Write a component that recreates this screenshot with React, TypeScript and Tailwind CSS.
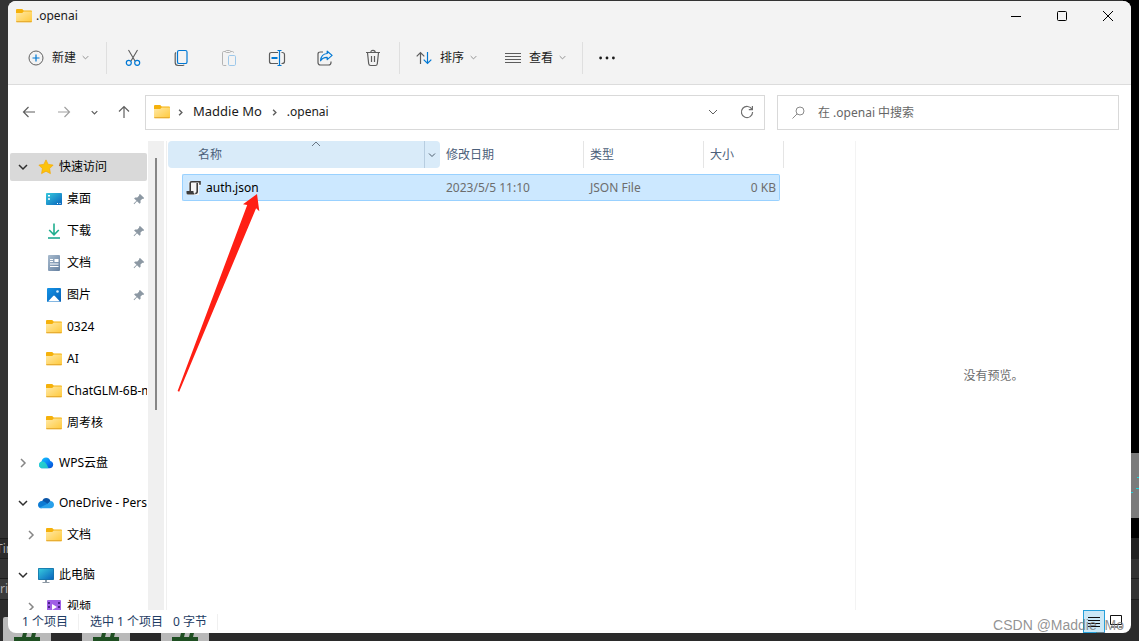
import { useState } from 'react'

type IconProps = { className?: string }

interface NavEntry {
  label: string
  icon: React.FC<IconProps>
  level: 0 | 1
  state?: 'open' | 'closed'
  pinned?: boolean
  active?: boolean
}

const FolderIcon: React.FC<IconProps> = ({ className }) => (
  <svg viewBox="0 0 16 14" className={`h-3.5 w-4 shrink-0 ${className ?? ''}`}>
    <defs>
      <linearGradient id="folder" x1="0" y1="0" x2="1" y2="1">
        <stop offset="0" stopColor="#ffe9a8" />
        <stop offset="1" stopColor="#ffc93a" />
      </linearGradient>
    </defs>
    <path d="M0 1Q0 0 1 0h5.200L7.700 1.500H15q1 0 1 1v4H0z" fill="#f5b10b" />
    <path d="M0 4h6.200L7.700 2.500H16v9.700q0 1-1 1H1q-1 0-1-1z" fill="url(#folder)" />
    <path d="M.3 12.700h15.400" stroke="#e3a62b" strokeWidth="1" />
  </svg>
)

const StarIcon: React.FC<IconProps> = () => (
  <svg viewBox="0 0 16 16" className="size-4 shrink-0">
    <path
      d="M8 .9l2.200 4.500 4.900.7-3.500 3.500.8 5L8 12.200l-4.400 2.400.8-5L.9 6.100l4.900-.7z"
      fill="#fcc30b"
      stroke="#f5a800"
      strokeWidth=".7"
      strokeLinejoin="round"
    />
  </svg>
)

const DesktopIcon: React.FC<IconProps> = () => (
  <svg viewBox="0 0 16 14" className="h-3.5 w-4 shrink-0">
    <defs>
      <linearGradient id="desktop" x1="0" y1="0" x2="1" y2="1">
        <stop offset="0" stopColor="#36c9dd" />
        <stop offset="1" stopColor="#0863bd" />
      </linearGradient>
    </defs>
    <rect y="1" width="16" height="12" rx=".8" fill="url(#desktop)" />
    <path d="M2 3h2v1.500H2zM2 6.200h2v1.500H2zM11 11h1v1h-1zM13.500 11h1v1h-1z" fill="#fff" />
  </svg>
)

const DownloadIcon: React.FC<IconProps> = () => (
  <svg viewBox="0 0 16 16" className="size-4 shrink-0" fill="none">
    <path d="M8 .5v11M3.200 7L8 11.800 12.800 7" stroke="#1fae8e" strokeWidth="1.600" />
    <path d="M2 15h12" stroke="#0fa58a" strokeWidth="1.600" />
  </svg>
)

const DocumentIcon: React.FC<IconProps> = () => (
  <svg viewBox="0 0 16 16" className="size-4 shrink-0">
    <defs>
      <linearGradient id="document" x1="0" y1="0" x2="1" y2="1">
        <stop offset="0" stopColor="#a9bccf" />
        <stop offset="1" stopColor="#6580a0" />
      </linearGradient>
    </defs>
    <rect x="2" width="12" height="16" rx="1" fill="url(#document)" />
    <path d="M4 4h3v1H4zM4 6h3v1H4zM8.500 4h4v3h-4zM4 8.500h8.500v1H4zM4 11h8.500v1H4z" fill="#fff" />
  </svg>
)

const PictureIcon: React.FC<IconProps> = () => (
  <svg viewBox="0 0 16 16" className="size-4 shrink-0">
    <defs>
      <linearGradient id="picture" x1="0" y1="0" x2="1" y2="1">
        <stop offset="0" stopColor="#1493e6" />
        <stop offset="1" stopColor="#0561b8" />
      </linearGradient>
    </defs>
    <rect x="1" y="1" width="14" height="14" rx="1" fill="url(#picture)" />
    <path d="M2 14.500l5.200-5.600q.8-.8 1.600 0l5.200 5.600z" fill="#fff" />
    <circle cx="11.500" cy="4.500" r="1.300" fill="#d4eeff" />
  </svg>
)

const WpsCloudIcon: React.FC<IconProps> = () => (
  <svg viewBox="0 0 16 16" className="size-4 shrink-0">
    <defs>
      <linearGradient id="wps" x1="0" y1="0" x2="1" y2="1">
        <stop offset="0" stopColor="#16d3ff" />
        <stop offset=".6" stopColor="#0a7cf5" />
        <stop offset="1" stopColor="#0548c8" />
      </linearGradient>
    </defs>
    <path
      d="M3.500 6.500C4 3.900 5.800 2.500 8 2.500c2.400 0 3.900 1.500 4.300 3.600 1.800.3 2.900 1.600 2.900 3.400 0 2.200-1.500 3.800-3.700 3.800H5C2.700 13.300 1 12 1 9.900c0-1.700 1-3 2.500-3.400z"
      fill="url(#wps)"
    />
    <path d="M1 9.900C1 8 2.400 6.500 4.500 6.500c2 0 3.500 1.600 4.500 3.500l1.500 3.300H5C2.700 13.300 1 12 1 9.900z" fill="#2fe0c0" opacity=".75" />
  </svg>
)

const OneDriveIcon: React.FC<IconProps> = () => (
  <svg viewBox="0 0 16 12" className="h-3 w-4 shrink-0">
    <path d="M4 4.500C4.800 2 6.300 1 8.200 1c2.100 0 3.700 1.200 4.300 3.200L9 8z" fill="#0a55a8" />
    <path d="M0 8c0-2.200 1.700-3.900 4-3.900 1.200 0 2 .4 3 1l3 2-6.500 4.200C1.500 11.300 0 10 0 8z" fill="#0c7bd4" />
    <path d="M12.200 4.100C14.500 4.200 16 5.700 16 7.700c0 2-1.400 3.600-3.500 3.600h-9C2.500 11.300 2 11 1.500 10.700L10 6.500z" fill="#29a0ea" />
  </svg>
)

const ComputerIcon: React.FC<IconProps> = () => (
  <svg viewBox="0 0 16 16" className="size-4 shrink-0">
    <rect y="1" width="16" height="12" rx=".8" fill="#1573a8" />
    <rect x=".8" y="1.800" width="14.400" height="10.400" fill="url(#desktop)" />
    <path d="M7 13h2v2H7zM4.500 15h7v1h-7z" fill="#8e9aa5" />
  </svg>
)

const VideoIcon: React.FC<IconProps> = () => (
  <svg viewBox="0 0 16 16" className="size-4 shrink-0">
    <rect x="1" y="1" width="14" height="14" rx="1" fill="#a05fe6" />
    <path d="M2 3h2v2H2zM2 7h2v2H2zM2 11h2v2H2zM12 3h2v2h-2zM12 7h2v2h-2zM12 11h2v2h-2z" fill="#4a2289" />
    <path d="M6 5l5 3-5 3z" fill="#fff" />
  </svg>
)

const PinIcon: React.FC = () => (
  <svg viewBox="0 0 12 12" className="size-3 shrink-0" fill="#8c98a3">
    <path d="M7 .9L11.200 5l-1 .9-.8-.2-1.900 1.900.1 2.200-1 1L4 8.300 1.200 11.200.6 10.600 3.500 7.800 1.100 5.400l1-1 2.200.1 1.900-1.900L6 1.800z" />
  </svg>
)

interface ChevronProps {
  direction: 'down' | 'right' | 'up'
  className: string
  width?: number
  size?: 'sm' | 'md'
}

const Chevron: React.FC<ChevronProps> = ({
  direction,
  className,
  width = 1,
  size = 'md',
}) => (
  <svg
    viewBox="0 0 10 10"
    className={`shrink-0 ${size === 'sm' ? 'size-[7px]' : 'size-2.5'} ${className}`}
    fill="none"
    stroke="currentColor"
    strokeWidth={width}
  >
    {direction === 'down' && <path d="M1 3l4 4 4-4" />}
    {direction === 'up' && <path d="M1 7l4-4 4 4" />}
    {direction === 'right' && <path d="M3 1l4 4-4 4" />}
  </svg>
)

const NAV: NavEntry[] = [
  { label: '快速访问', icon: StarIcon, level: 0, state: 'open', active: true },
  { label: '桌面', icon: DesktopIcon, level: 1, pinned: true },
  { label: '下载', icon: DownloadIcon, level: 1, pinned: true },
  { label: '文档', icon: DocumentIcon, level: 1, pinned: true },
  { label: '图片', icon: PictureIcon, level: 1, pinned: true },
  { label: '0324', icon: FolderIcon, level: 1 },
  { label: 'AI', icon: FolderIcon, level: 1 },
  { label: 'ChatGLM-6B-main', icon: FolderIcon, level: 1 },
  { label: '周考核', icon: FolderIcon, level: 1 },
  { label: 'WPS云盘', icon: WpsCloudIcon, level: 0, state: 'closed' },
  { label: 'OneDrive - Personal', icon: OneDriveIcon, level: 0, state: 'open' },
  { label: '文档', icon: FolderIcon, level: 1, state: 'closed' },
  { label: '此电脑', icon: ComputerIcon, level: 0, state: 'open' },
  { label: '视频', icon: VideoIcon, level: 1, state: 'closed' },
]

const Backdrop: React.FC = () => (
  <div
    aria-hidden="true"
    className="absolute inset-0 flex flex-col justify-end overflow-hidden bg-[#2b2b2b]"
  >
    <div className="flex flex-1 justify-between">
      <div className="flex flex-1 flex-col overflow-hidden text-xs text-[#b0b0b0]">
        <div className="flex-1 bg-[#333333]" />
        <div className="flex h-[21px] items-center border-y border-[#1c1c1c] bg-[#2b2b2b] -indent-1">
          Tin
        </div>
        <div className="h-5 border-b border-[#1c1c1c] bg-[#333333]" />
        <div className="flex h-[21px] items-center border-b border-[#1c1c1c] bg-[#3a3a3a]">ri</div>
        <div className="h-[17px]" />
      </div>
      <div className="flex w-4 flex-col">
        <div className="flex-1 bg-black" />
        <div className="flex h-[65px] items-center justify-end bg-[#7b7b7b]">
          <svg viewBox="0 0 8 20" className="h-5 w-2" fill="#1fd0d8">
            <path d="M6 1h2v1H6zM5 12h3v1H5zM0 16h2v1H0z" />
          </svg>
        </div>
        <div className="h-5 bg-black" />
        <div className="h-[21px] bg-[#222222]" />
        <div className="h-5 border-b border-[#1c1c1c] bg-[#333333]" />
        <div className="h-[21px] border-b border-[#1c1c1c] bg-[#333333]" />
        <div className="h-[17px]" />
      </div>
    </div>
    <div className="flex h-6 gap-[31px] pl-[3px]">
      {[0, 1, 2].map((i) => (
        <svg key={i} viewBox="0 0 48 24" className="h-6 w-12">
          <path d="M0 24V2q0-2 2-2h44q2 0 2 2v22z" fill="#b9b9b9" />
          <path d="M20 16h4l-1 4h5l1-4h4l-1 4h5v4H11v-4h8z" fill="#1f4f22" />
        </svg>
      ))}
    </div>
  </div>
)

const TitleBar: React.FC = () => (
  <header className="flex h-[30px] shrink-0 items-center justify-between bg-[#f3f3f3] pb-px">
    <div className="flex items-center gap-1 pl-2">
      <FolderIcon />
      <h1 className="text-xs">.openai</h1>
    </div>
    <div className="flex h-full">
      <button aria-label="最小化" className="flex w-[46px] items-center justify-center">
        <svg viewBox="0 0 12 12" className="size-3" stroke="#000">
          <path d="M1 6.500h10" />
        </svg>
      </button>
      <button aria-label="最大化" className="flex w-[46px] items-center justify-center">
        <svg viewBox="0 0 12 12" className="size-3" fill="none" stroke="#000">
          <rect x="1.500" y="1.500" width="9" height="9" rx="1" />
        </svg>
      </button>
      <button aria-label="关闭" className="flex w-[46px] items-center justify-center">
        <svg viewBox="0 0 12 12" className="size-3" stroke="#000">
          <path d="M1 1l10 10M11 1L1 11" />
        </svg>
      </button>
    </div>
  </header>
)

const ToolbarDivider: React.FC = () => <div className="h-8 w-px shrink-0 bg-[#dfdfdf]" />

const Toolbar: React.FC = () => (
  <div
    role="toolbar"
    className="flex h-[54px] shrink-0 items-center border-b border-[#dcdcdc] bg-[#f3f3f3]"
  >
    <button className="flex h-8 w-[98px] items-center pl-5">
      <svg viewBox="0 0 16 16" className="size-4" fill="none">
        <circle cx="8" cy="8" r="7" stroke="#616161" />
        <path d="M8 4.500v7M4.500 8h7" stroke="#0078d4" strokeWidth="1.200" />
      </svg>
      <span className="pl-2">新建</span>
      <Chevron direction="down" size="sm" width={1.4} className="ml-1.5 text-[#909090]" />
    </button>
    <ToolbarDivider />
    <div className="flex px-0.5">
      <button aria-label="剪切" className="flex h-8 w-12 items-center justify-center">
        <svg viewBox="0 0 16 18" className="h-[18px] w-4" fill="none">
          <path d="M3.500 1l6.500 11M12.500 1L6 12" stroke="#5c5c5c" strokeWidth="1.100" />
          <circle cx="3.800" cy="13.800" r="2.500" stroke="#0078d4" strokeWidth="1.200" />
          <circle cx="12.200" cy="13.800" r="2.500" stroke="#0078d4" strokeWidth="1.200" />
        </svg>
      </button>
      <button aria-label="复制" className="flex h-8 w-12 items-center justify-center">
        <svg viewBox="0 0 16 18" className="h-[18px] w-4" fill="none">
          <path d="M3 3.500q-.8.500-.8 1.500v8.500q0 3 3 3H9.500q1.200 0 1.700-.8" stroke="#5c5c5c" strokeWidth="1.200" />
          <rect x="4.500" y="1.500" width="9.500" height="13" rx="1.600" stroke="#0078d4" strokeWidth="1.200" />
        </svg>
      </button>
      <button aria-label="粘贴" disabled className="flex h-8 w-12 items-center justify-center">
        <svg viewBox="0 0 16 18" className="h-[18px] w-4" fill="none">
          <path
            d="M4.500 2.500H2.700q-1.200 0-1.200 1.200v11.600q0 1.200 1.200 1.200h2.600M9.500 2.500h1.900q1.200 0 1.200 1.200"
            stroke="#b4b4b4"
          />
          <rect x="4.500" y="1.500" width="5" height="2" rx="1" stroke="#b4b4b4" />
          <rect x="7.500" y="6.500" width="7" height="10" rx="1.200" stroke="#9dc8ea" />
        </svg>
      </button>
      <button aria-label="重命名" className="flex h-8 w-12 items-center justify-center">
        <svg viewBox="0 0 18 18" className="size-[18px]" fill="none">
          <path
            d="M10 3.500H3.500q-2 0-2 2v7q0 2 2 2H10M13.500 3.500h.5q2.500 0 2.500 2v7q0 2-2.500 2h-.5"
            stroke="#5c5c5c"
            strokeWidth="1.200"
          />
          <path d="M3.500 9h6" stroke="#0078d4" strokeWidth="2" />
          <path d="M9.500 1.500h4M9.500 16.500h4M11.500 1.500v15" stroke="#0078d4" strokeWidth="1.200" />
        </svg>
      </button>
      <button aria-label="共享" className="flex h-8 w-12 items-center justify-center">
        <svg viewBox="0 0 18 18" className="size-[18px]" fill="none" strokeLinejoin="round">
          <path
            d="M7 3H4.500q-2.500 0-2.500 2V13.500q0 2.500 2.500 2.500h8q2.500 0 2.500-2.500v-1"
            stroke="#5c5c5c"
            strokeWidth="1.200"
          />
          <path
            d="M11.200 2.200l4.900 4.200-4.900 4.200V8.400C8.500 8.300 6.300 9 4.600 11.800 4.900 7.500 7.500 4.700 11.200 4.500z"
            stroke="#0078d4"
            strokeWidth="1.200"
          />
        </svg>
      </button>
      <button aria-label="删除" className="flex h-8 w-12 items-center justify-center">
        <svg viewBox="0 0 16 18" className="h-[18px] w-4" fill="none" stroke="#5c5c5c" strokeWidth="1.200">
          <path d="M1 3.500h14M5.800 3.500q0-2.200 2.200-2.200t2.200 2.200M2.500 3.800l1.200 11q.2 1.700 1.900 1.700h4.800q1.700 0 1.900-1.700l1.200-11M6.500 7v6M9.500 7v6" />
        </svg>
      </button>
    </div>
    <ToolbarDivider />
    <button className="flex h-8 items-center pl-4">
      <svg viewBox="0 0 16 14" className="h-3.5 w-4" fill="none" strokeWidth="1.200">
        <path d="M4.500 13V1.500M.7 5.300l3.800-3.800 3.800 3.800" stroke="#5c5c5c" />
        <path d="M11.500 1v11.500M7.700 8.700l3.800 3.800 3.800-3.800" stroke="#0078d4" />
      </svg>
      <span className="pl-2">排序</span>
      <Chevron direction="down" size="sm" width={1.4} className="ml-1.5 text-[#909090]" />
    </button>
    <button className="flex h-8 items-center pr-4 pl-7">
      <svg viewBox="0 0 16 14" className="h-3.5 w-4" stroke="#5c5c5c">
        <path d="M0 2.500h16M0 5.500h16M0 8.500h16M0 11.500h16" />
      </svg>
      <span className="pl-2">查看</span>
      <Chevron direction="down" size="sm" width={1.4} className="ml-1.5 text-[#909090]" />
    </button>
    <ToolbarDivider />
    <button aria-label="查看更多" className="flex h-8 w-12 items-center justify-center">
      <svg viewBox="0 0 16 4" className="h-1 w-4" fill="#1a1a1a">
        <circle cx="1.600" cy="2" r="1.400" />
        <circle cx="8" cy="2" r="1.400" />
        <circle cx="14.400" cy="2" r="1.400" />
      </svg>
    </button>
  </div>
)

const AddressRow: React.FC = () => (
  <div className="flex h-14 shrink-0 items-center px-3 pb-px">
    <div className="flex w-[125px] items-center pb-px">
      <button aria-label="返回" className="flex h-8 w-[18px] items-center justify-center">
        <svg viewBox="0 0 14 14" className="size-3.5" fill="none" stroke="#5f5f5f" strokeWidth="1.200">
          <path d="M13 7H1.500M6.500 2l-5 5 5 5" />
        </svg>
      </button>
      <button aria-label="前进" disabled className="ml-[17px] flex h-8 w-[18px] items-center justify-center">
        <svg viewBox="0 0 14 14" className="size-3.5" fill="none" stroke="#a0a0a0" strokeWidth="1.200">
          <path d="M1 7h11.500M7.500 2l5 5-5 5" />
        </svg>
      </button>
      <button aria-label="最近的位置" className="ml-3 flex h-8 w-[18px] items-center justify-center">
        <Chevron direction="down" size="sm" width={1.8} className="text-[#5f5f5f]" />
      </button>
      <button aria-label="向上" className="ml-3 flex h-8 w-[18px] items-center justify-center">
        <svg viewBox="0 0 14 14" className="size-3.5" fill="none" stroke="#5f5f5f" strokeWidth="1.200">
          <path d="M7 13V1.500M2 6.500l5-5 5 5" />
        </svg>
      </button>
    </div>
    <nav className="flex h-[35px] flex-1 items-center border border-[#d9d9d9] pb-px pl-2 text-[13px]">
      <FolderIcon />
      <Chevron direction="right" size="sm" width={2} className="ml-[7px] text-[#5f5f5f]" />
      <a href="#user" className="ml-[9px]">Maddie Mo</a>
      <Chevron direction="right" size="sm" width={2} className="mx-[9px] text-[#5f5f5f]" />
      <a href="#openai" className="text-xs">.openai</a>
      <button aria-label="以前的位置" className="ml-auto flex h-8 w-8 items-center justify-center">
        <Chevron direction="down" className="text-[#5f5f5f]" />
      </button>
      <button aria-label="刷新" className="flex h-8 w-[35px] items-center justify-center">
        <svg viewBox="0 0 14 14" className="size-3.5" fill="none" stroke="#6f6f6f" strokeWidth="1.200">
          <path d="M12 4.500A5.600 5.600 0 1 0 12.600 7M12.400 1v3.600H8.800" />
        </svg>
      </button>
    </nav>
    <label className="ml-3 flex h-[35px] w-[342px] items-center border border-[#d9d9d9] pl-3.5">
      <svg viewBox="0 0 14 14" className="size-3.5 shrink-0" fill="none" stroke="#8a8a8a">
        <circle cx="8" cy="5" r="4" />
        <path d="M5.200 7.800L.5 12.500" />
      </svg>
      <input
        type="text"
        aria-label="搜索"
        placeholder="在 .openai 中搜索"
        className="w-full bg-transparent pl-3 text-xs outline-none placeholder:text-[#666666]"
      />
    </label>
  </div>
)

const NavItem: React.FC<{ entry: NavEntry }> = ({ entry }) => {
  const { label, icon: Icon, level, state, pinned, active } = entry
  return (
    <li className={`py-0.5 ${level === 0 && !active ? 'mt-2' : ''}`}>
      <a
        href="#nav"
        className={`flex h-7 items-center rounded-xs ${active ? 'bg-[#d9d9d9]' : ''} ${
          level === 0 ? 'pl-2' : 'pl-4'
        }`}
      >
        <span className="flex w-5 shrink-0 items-center">
          {state === 'open' && (
            <Chevron direction="down" width={1.5} className="text-[#2f2f2f]" />
          )}
          {state === 'closed' && (
            <Chevron direction="right" width={1.5} className="text-[#868686]" />
          )}
        </span>
        <Icon />
        <span className="min-w-0 flex-1 overflow-hidden pl-[5px] whitespace-nowrap">
          {label}
        </span>
        {pinned && (
          <span className="pr-0.5">
            <PinIcon />
          </span>
        )}
      </a>
    </li>
  )
}

const Sidebar: React.FC = () => (
  <aside className="flex w-[159px] shrink-0 border-r border-[#f0f0f0] pr-0.5 text-black">
    <ul className="w-[139px] shrink-0 overflow-hidden pt-2.5 pl-0.5">
      {NAV.map((entry, i) => (
        <NavItem key={i} entry={entry} />
      ))}
    </ul>
    <div className="ml-px flex w-4 shrink-0 justify-center bg-[#f0f0f0] pt-[17px]">
      <div className="h-[252px] w-0.5 bg-[#868686]" />
    </div>
  </aside>
)

const JsonFileIcon: React.FC = () => (
  <svg viewBox="0 0 16 16" className="size-4 shrink-0">
    <path d="M2.500 1H14.500v5h-1.500V15H1v-4h2z" fill="#f5f5f5" />
    <path
      d="M4.200 11V3.300q0-1.500 1.500-1.500H14v3M11.200 3v8.500q0 2-2 2"
      fill="none"
      stroke="#3c3c3c"
      strokeWidth="1.600"
    />
    <path d="M.5 11h7v1.200q0 1 1 1.200v1.100H2Q.5 14.500.5 13z" fill="#3c3c3c" />
  </svg>
)

const FileTable: React.FC = () => (
  <table className="ml-px w-[616px] table-fixed border-separate border-spacing-0 text-left">
    <colgroup>
      <col className="w-[272px]" />
      <col className="w-36" />
      <col className="w-[120px]" />
      <col className="w-20" />
    </colgroup>
    <thead className="text-[#4c607a]">
      <tr className="h-[27px]">
        <th scope="col" className="relative rounded-sm bg-[#d9ebf9] p-0 font-normal">
          <div className="flex h-[27px]">
            <button className="flex-1 border-r border-[#b7cde0] pl-[30px] text-left">名称</button>
            <button aria-label="筛选" className="flex w-[15px] items-center justify-center pr-0.5">
              <svg viewBox="0 0 8 8" className="size-2" fill="none" stroke="#4c5c6c">
                <path d="M1 2.500l3 3 3-3" />
              </svg>
            </button>
          </div>
          <Chevron direction="up" className="absolute -top-0.5 left-[143px] text-[#6a7785]" />
        </th>
        <th scope="col" className="border-r border-[#e5e5e5] p-0 pl-1.5 font-normal">修改日期</th>
        <th scope="col" className="border-r border-[#e5e5e5] p-0 pl-1.5 font-normal">类型</th>
        <th scope="col" className="border-r border-[#e5e5e5] p-0 pl-1.5 font-normal">大小</th>
      </tr>
    </thead>
    <tbody className="text-[#6d6d6d]">
      <tr>
        <td className="p-0 pt-1.5 pl-3.5">
          <div className="flex h-[27px] items-center gap-1 rounded-l-xs border-y border-l border-[#99d1ff] bg-[#cce8ff] pl-[3px] text-black">
            <JsonFileIcon />
            auth.json
          </div>
        </td>
        <td className="p-0 pt-1.5">
          <div className="flex h-[27px] items-center border-y border-[#99d1ff] bg-[#cce8ff] pl-1.5">
            2023/5/5 11:10
          </div>
        </td>
        <td className="p-0 pt-1.5">
          <div className="flex h-[27px] items-center border-y border-[#99d1ff] bg-[#cce8ff] pl-1.5">
            JSON File
          </div>
        </td>
        <td className="p-0 pt-1.5 pr-1">
          <div className="flex h-[27px] items-center justify-end rounded-r-xs border-y border-r border-[#99d1ff] bg-[#cce8ff] pr-[3px]">
            0 KB
          </div>
        </td>
      </tr>
    </tbody>
  </table>
)

const StatusBar: React.FC<{ view: string; setView: (view: string) => void }> = ({
  view,
  setView,
}) => (
  <footer className="flex h-[23px] shrink-0 items-center pr-1 pl-3.5 text-[#1e3c64]">
    <span className="border-r border-[#f0f0f0] pr-2.5">1 个项目</span>
    <span className="pl-[11px]">选中 1 个项目</span>
    <span className="border-r border-[#f0f0f0] pr-2.5 pl-2.5">0 字节</span>
    <div className="ml-auto flex h-full">
      <button
        aria-label="详细信息"
        onClick={() => setView('details')}
        className={`flex w-[22px] items-center justify-center border ${
          view === 'details' ? 'border-[#26a0da] bg-[#cbe8f6]' : 'border-transparent'
        }`}
      >
        <svg viewBox="0 0 14 14" className="size-3.5" stroke="#111">
          <path d="M1 2.500h12M1 5.500h12M1 8.500h12M1 11.500h12" />
        </svg>
      </button>
      <button
        aria-label="大图标"
        onClick={() => setView('icons')}
        className={`flex w-[22px] items-center justify-center border ${
          view === 'icons' ? 'border-[#26a0da] bg-[#cbe8f6]' : 'border-transparent'
        }`}
      >
        <svg viewBox="0 0 14 14" className="size-3.5" fill="none" stroke="#111">
          <path d="M1.500.5h11v9h-11zM2 12h3M6 12h3M10 12h3" />
        </svg>
      </button>
    </div>
  </footer>
)

export default function App() {
  const [view, setView] = useState('details')

  return (
    <div className="relative h-screen overflow-hidden px-2 pt-px pb-2 font-['Noto_Sans','Noto_Sans_CJK_SC',sans-serif] text-xs text-[#1a1a1a]">
      <Backdrop />
      <main className="relative flex h-full flex-col overflow-hidden rounded-lg bg-white">
        <TitleBar />
        <Toolbar />
        <AddressRow />
        <div className="flex min-h-0 flex-1">
          <Sidebar />
          <section className="relative flex-1 overflow-hidden">
            <FileTable />
            {/* arrow pointing at the selected file */}
            <svg
              viewBox="0 0 84 202"
              className="pointer-events-none absolute top-[52px] left-2.5 h-[202px] w-[84px]"
              fill="#ff1f14"
            >
              <path d="M80 1l2.300 17.200-3.200-3L2.200 198.700.6 198 70.200 12l-4.200-.8z" />
            </svg>
          </section>
          <aside className="flex w-[276px] shrink-0 items-center justify-center border-l border-[#f3f3f3] text-[#6d6d6d]">
            没有预览。
          </aside>
        </div>
        <StatusBar view={view} setView={setView} />
      </main>
      <p className="pointer-events-none absolute right-[15px] bottom-1.5 font-['Liberation_Sans',sans-serif] text-sm text-[#777777]/80">
        CSDN @Maddie_Mo
      </p>
    </div>
  )
}
